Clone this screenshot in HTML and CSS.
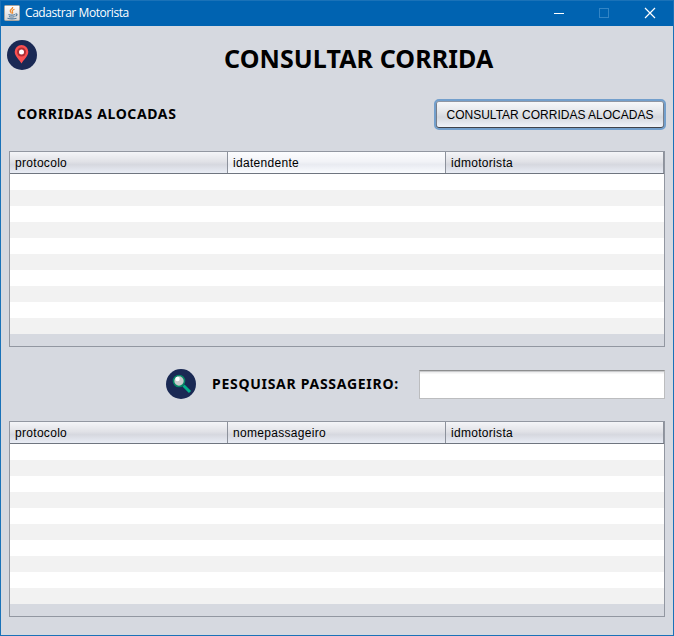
FILE: index.html
```
<!DOCTYPE html>
<html lang="pt-BR">
<head>
<meta charset="utf-8">
<title>Cadastrar Motorista</title>
<link rel="stylesheet" href="styles.css">
</head>
<body>
<div class="window">
  <header class="titlebar">
    <svg class="java" width="16" height="16" viewBox="0 0 16 16">
      <defs><linearGradient id="tile" x1="0" y1="0" x2="0" y2="1"><stop offset="0" stop-color="#fff"/><stop offset="1" stop-color="#d5d5d5"/></linearGradient></defs>
      <rect x=".5" y=".5" width="15" height="15" rx="1" fill="url(#tile)" stroke="#a9a6a0"/>
      <path d="M8.7 2c.4 2-3 2.600-2.500 4.200.2.8 1 1.300 1.200 2.300M10.500 4.200C8.300 5 7.700 6 8.500 7c.4.600.2 1.100-.3 1.600" fill="none" stroke="#ee8a2c" stroke-width="1.200"/>
      <path d="M4.500 9.500c1.500.8 5 .8 6.500 0M5 11.400c1.500.7 4 .7 5.500 0M3.500 13.200c2.500.8 6.500.8 9 0M11.500 9c2-.6 2.200 1.300 0 2.200" fill="none" stroke="#547b9b" stroke-width="1.100"/>
    </svg>
    <span class="caption">Cadastrar Motorista</span>
    <svg class="controls" width="104" height="12" viewBox="0 0 104 12" shape-rendering="crispEdges" fill="none">
      <path d="M0 6.500h10" stroke="#fff"/>
      <rect x="45.500" y="1.500" width="9" height="9" stroke="#3385c5"/>
      <path d="M91 1l10 10M101 1L91 11" stroke="#fff" stroke-width="1.200" shape-rendering="auto"/>
    </svg>
  </header>
  <main>
    <div class="heading">
      <svg width="30" height="30" viewBox="0 0 30 30">
        <circle cx="15" cy="15" r="15" fill="#1a2954"/>
        <path d="M14.500 23.500C12.700 20 7.700 16.500 7.700 11.800a6.800 6.800 0 0 1 13.600 0c0 4.700-5 8.200-6.800 11.700z" fill="#fb5051"/>
        <circle cx="14.500" cy="12" r="4.500" fill="#ad2f35"/>
        <circle cx="14.500" cy="12" r="2.500" fill="#fff"/>
      </svg>
      <h1>CONSULTAR CORRIDA</h1>
    </div>
    <div class="toolbar">
      <h2>CORRIDAS ALOCADAS</h2>
      <button type="button">CONSULTAR CORRIDAS ALOCADAS</button>
    </div>
    <section class="grid">
      <div class="head"><div>protocolo</div><div class="hover">idatendente</div><div>idmotorista</div></div>
      <div class="rows"></div>
    </section>
    <div class="search">
      <svg width="30" height="30" viewBox="0 0 30 30">
        <circle cx="15" cy="15" r="15" fill="#1a2954"/>
        <path d="M17.500 16.500l6.500 6.500" stroke="#04b28c" stroke-width="3"/>
        <circle cx="13" cy="12" r="5.500" fill="#c9c9cb" stroke="#078866" stroke-width="1.600"/>
        <circle cx="11.500" cy="10" r="2.200" fill="#fff"/>
      </svg>
      <label for="q">PESQUISAR PASSAGEIRO:</label>
      <input id="q" type="text">
    </div>
    <section class="grid">
      <div class="head"><div>protocolo</div><div>nomepassageiro</div><div>idmotorista</div></div>
      <div class="rows"></div>
    </section>
  </main>
</div>
</body>
</html>
```
FILE: styles.css
```
* { box-sizing: border-box; }
body { margin: 0; background: #d6d9e0; }
.window {
  width: 674px;
  height: 636px;
  border: 1px solid #1a72b8;
  background: #d6d9e0;
  overflow: hidden;
}
.titlebar {
  height: 25px;
  display: flex;
  align-items: center;
  padding-left: 3px;
  background: #0063b1;
}
.java { margin-top: -1px; }
.caption {
  margin: -1px 0 0 5px;
  font: 12px/16px "Open Sans", sans-serif;
  letter-spacing: -.43px;
  color: #fff;
}
.controls { margin: -2px 15px 0 auto; }
main { padding: 0 8px; }
.heading {
  height: 73px;
  display: flex;
  align-items: flex-start;
  padding-top: 14px;
  margin-left: -2px;
}
h1, h2, label {
  margin: 0;
  font-family: "Noto Sans", sans-serif;
  font-weight: 700;
  color: #000;
  white-space: nowrap;
}
h1 {
  margin: -1px 0 0 187px;
  font-size: 25px;
  line-height: 38px;
  letter-spacing: .1px;
}
.toolbar {
  height: 31px;
  display: flex;
  justify-content: space-between;
  align-items: center;
  margin-right: -1px;
  padding-left: 8px;
}
h2, label { font-size: 14px; line-height: 20px; letter-spacing: .72px; }
h2 { margin-top: -2px; letter-spacing: .62px; }
button {
  width: 232px;
  height: 31px;
  padding: 0;
  border: 2px solid #739fcc;
  border-radius: 5px;
  background: linear-gradient(#f8f9fb, #e4e6ea 40%, #d5d8de 60%, #f2f5fc) padding-box;
  box-shadow: inset 0 1px #8f96a3, inset 0 -1px #40434a, inset 1px 0 #777d89, inset -1px 0 #777d89;
  font: 12px/20px "Liberation Sans", sans-serif;
  color: #000;
  white-space: nowrap;
}
.grid {
  height: 196px;
  border: 1px solid #9297a1;
}
.toolbar + .grid { margin-top: 21px; }
.head {
  height: 22px;
  display: grid;
  grid-template-columns: repeat(3, 218px);
  border-bottom: 1px solid #6f757f;
  background: linear-gradient(#f4f5f8, #e1e2e7 45%, #d6d8df 60%, #e9edf5);
  font: 12px/21px "Liberation Sans", sans-serif;
  letter-spacing: .3px;
  color: #000;
}
.head div { height: 21px; padding: 1px 0 0 5px; border-right: 1px solid #8d929c; line-height: 20px; }
.head .hover { background: linear-gradient(#fcfdff, #f2f3f7 45%, #e9ebf1 60%, #fafcff); }
.rows {
  height: 160px;
  background: repeating-linear-gradient(#fff 0 16px, #f2f2f2 16px 32px);
}
.search {
  height: 74px;
  display: flex;
  align-items: center;
  padding-left: 157px;
}
.search svg { flex: none; }
.search label { margin-left: 16px; }
.search input {
  width: 246px;
  height: 29px;
  margin: 1px 0 0 auto;
  padding: 0 6px;
  border: 1px solid #bcbdbf;
  border-top-color: #8d8e8f;
  background: linear-gradient(#c9cacc 0 1px, #efeff0 1px 2px, #fff 3px);
}
```
